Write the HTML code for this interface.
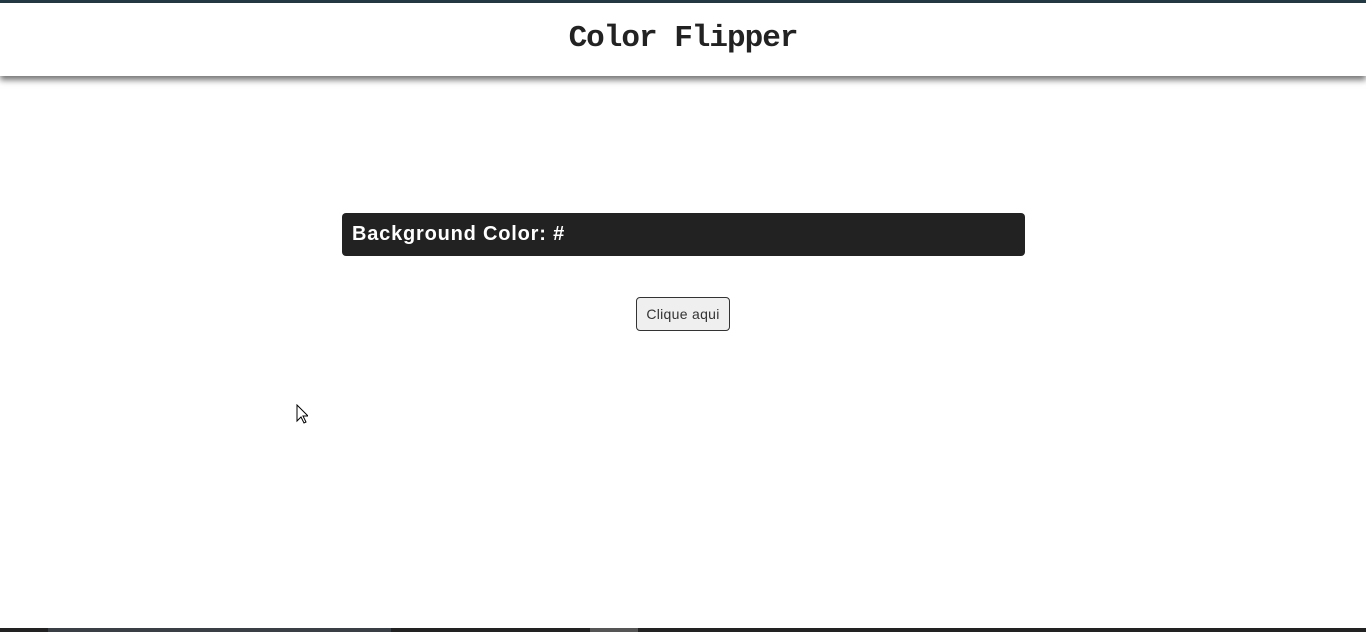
<!DOCTYPE html>
<html><head><style>
body{margin:0;width:1366px;height:632px;background:#fff;position:relative;overflow:hidden;font-family:"Liberation Sans",sans-serif}
.top{position:absolute;top:0;left:0;width:1366px;height:3px;background:#243a44}
.hdr{position:absolute;top:3px;left:0;width:1366px;height:73px;background:#fff;box-shadow:0 4px 6px rgba(0,0,0,.55)}
.hdr h1{margin:0;text-align:center;line-height:72px;font-family:"Liberation Mono",monospace;font-weight:bold;font-size:31px;color:#222;letter-spacing:-1px}
.bar{position:absolute;left:342px;top:213px;width:683px;height:43px;background:#222;border-radius:4px;color:#fff;font-weight:900;font-size:20px;letter-spacing:0.8px;line-height:43px;box-sizing:border-box;padding-left:10px}
.btn{position:absolute;left:636px;top:297px;width:94px;height:34px;box-sizing:border-box;border:1px solid #333;border-radius:4px;background:#efefef;font-size:14px;letter-spacing:0.3px;color:#333;text-align:center;line-height:32px}
.bot{position:absolute;left:0;top:628px;width:1366px;height:4px;background:#222}
.bot i{position:absolute;top:0;height:4px}
</style></head><body>
<div class="top"></div>
<div class="hdr"><h1>Color Flipper</h1></div>
<div class="bar">Background Color: #</div>
<div class="btn">Clique aqui</div>
<svg style="position:absolute;left:296px;top:404px" width="12" height="20" viewBox="0 0 12 20"><path d="M1 1v16l4-4 3 6 2-1-3-6h5z" fill="#fff" stroke="#000" stroke-width="1"/></svg>
<div class="bot"><i style="left:48px;width:343px;background:#3a3f45"></i><i style="left:590px;width:48px;background:#555"></i></div>
</body></html>
